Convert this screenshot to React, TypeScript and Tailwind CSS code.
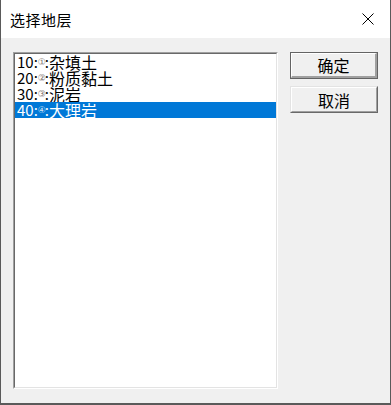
import React from "react";

const items = [
  { code: "10", mark: "①", name: "杂填土" },
  { code: "20", mark: "②", name: "粉质黏土" },
  { code: "30", mark: "③", name: "泥岩" },
  { code: "40", mark: "④", name: "大理岩" },
];

const font = { fontFamily: '"Noto Sans CJK SC", "Noto Sans", sans-serif' };

function Btn({ label, primary }: { label: string; primary?: boolean }) {
  if (primary) {
    return (
      <div className="w-[88px] h-[27px] border border-[#646464] flex">
        <div className="flex-1 border-t border-l border-t-white border-l-white border-b-2 border-r-2 border-b-[#a0a0a0] border-r-[#a0a0a0] bg-[#f0f0f0] flex items-center justify-center text-[16px] text-black leading-none">
          {label}
        </div>
      </div>
    );
  }
  return (
    <div className="w-[88px] h-[27px] border-t border-l border-t-[#e3e3e3] border-l-[#e3e3e3] border-b border-r border-b-[#696969] border-r-[#696969] flex">
      <div className="flex-1 border-t border-l border-t-white border-l-white border-b border-r border-b-[#a0a0a0] border-r-[#a0a0a0] bg-[#f0f0f0] flex items-center justify-center text-[16px] text-black leading-none">
        {label}
      </div>
    </div>
  );
}

export default function App() {
  return (
    <div
      className="w-[391px] h-[405px] flex flex-col bg-white border-l border-r border-b-2 border-[#5a5a5a] overflow-hidden"
      style={font}
    >
      <div className="h-[38px] bg-white flex items-center pl-[9px] pr-[16px] shrink-0">
        <span className="text-[15px] text-black leading-none tracking-[0.5px]">选择地层</span>
        <div className="flex-1" />
        <svg width="12" height="12" viewBox="0 0 12 12">
          <path d="M0.5 0.5 L11.5 11.5 M11.5 0.5 L0.5 11.5" stroke="#000" strokeWidth="1" fill="none" />
        </svg>
      </div>
      <div className="flex-1 bg-[#f0f0f0] flex pl-[12px] pt-[14px]">
        <div className="w-[265px] h-[337px] flex border-t border-l border-t-[#a0a0a0] border-l-[#a0a0a0] border-b border-r border-b-white border-r-white">
          <div className="flex-1 flex flex-col bg-white border-t border-l border-t-[#696969] border-l-[#696969] border-b border-r border-b-[#e3e3e3] border-r-[#e3e3e3]">
            {items.map((it, i) => {
              const sel = i === 3;
              return (
                <div
                  key={it.code}
                  className={
                    "h-[16px] flex items-center pl-[2px] leading-[16px] whitespace-nowrap " +
                    (sel ? "bg-[#0078d7] text-white" : "text-black")
                  }
                >
                  <span className="text-[15px] leading-[16px]">{it.code}:</span>
                  <span
                    className={
                      "inline-block w-[7px] text-center text-[9px] leading-[16px] " +
                      (sel ? "text-[#cfe0f3]" : "text-[#7d7470]")
                    }
                    style={{ fontFamily: '"DejaVu Sans", sans-serif' }}
                  >
                    {it.mark}
                  </span>
                  <span className="text-[15px] leading-[16px]">:</span>
                  <span className="text-[16px] leading-[16px]">{it.name}</span>
                </div>
              );
            })}
          </div>
        </div>
        <div className="ml-[12px] flex flex-col gap-[7px]">
          <Btn label="确定" primary />
          <Btn label="取消" />
        </div>
      </div>
    </div>
  );
}
